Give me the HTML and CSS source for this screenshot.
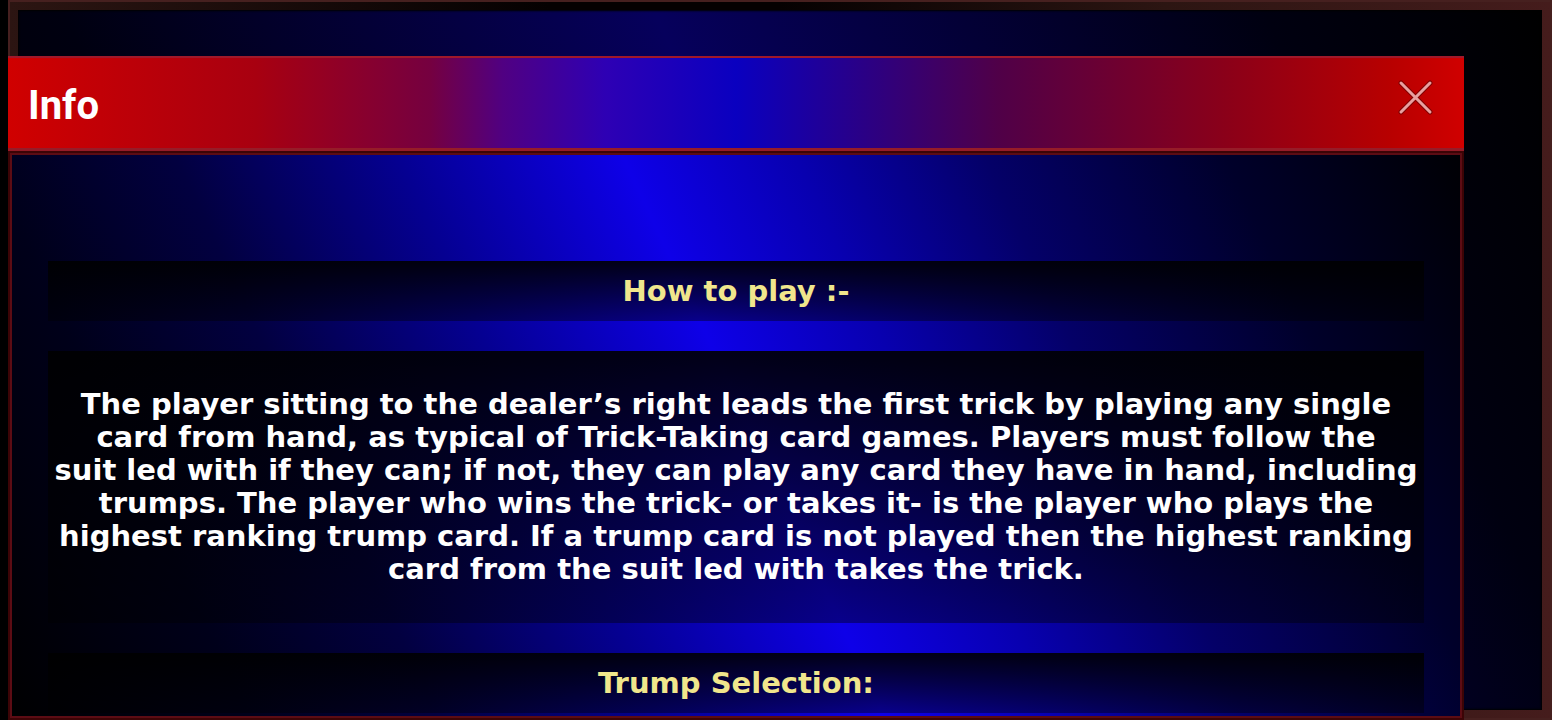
FILE: index.html
```html
<!DOCTYPE html>
<html lang="en">
<head>
  <meta charset="UTF-8" />
  <meta name="viewport" content="width=device-width, initial-scale=1" />
  <title>Info</title>
  <link rel="stylesheet" href="styles.css">
</head>
<body>
  <div class="frame">
    <div class="table"></div>
  </div>

  <div class="popup" role="dialog" aria-labelledby="popupTitle">
    <div class="popup-header">
      <h1 id="popupTitle">Info</h1>
      <button type="button" class="close-btn" aria-label="Close">
        <svg viewBox="0 0 36 36" aria-hidden="true">
          <path class="edge" d="M3 3l29 29M32 3L3 32"/>
          <path class="cross" d="M3 3l29 29M32 3L3 32"/>
        </svg>
      </button>
    </div>

    <div class="popup-content">
      <h2 class="card">How to play :-</h2>
      <p class="card rules">
        The player sitting to the dealer’s right leads the first trick by playing any single<br>
        card from hand, as typical of Trick-Taking card games. Players must follow the<br>
        suit led with if they can; if not, they can play any card they have in hand, including<br>
        trumps. The player who wins the trick- or takes it- is the player who plays the<br>
        highest ranking trump card. If a trump card is not played then the highest ranking<br>
        card from the suit led with takes the trick.
      </p>
      <h2 class="card">Trump Selection:</h2>
    </div>
  </div>
</body>
</html>
```
FILE: styles.css
```css
* {
  box-sizing: border-box;
}
body {
  margin: 0;
  height: 100vh;
  padding-left: 8px;
  background: #000;
  font-family: "DejaVu Sans", sans-serif;
  overflow: hidden;
}
.frame {
  height: 100%;
  display: flex;
  padding: 8px;
  border: 2px solid #46201f;
  background: linear-gradient(90deg, #2c1512, #050101 35%, #050101 50%, #2c1512 75%, #451c1c);
}
.table {
  flex: 1;
  background: linear-gradient(65deg, #000, #000010 20%, #06005c 52%, #000010 85%, #000);
  box-shadow: inset 0 0 2px 1px #000;
}
/* popup sits over the table */
.popup {
  position: fixed;
  top: 56px;
  right: 88px;
  bottom: 0;
  left: 8px;
  display: flex;
  flex-direction: column;
}
.popup-header {
  display: flex;
  justify-content: space-between;
  align-items: flex-start;
  height: 95px;
  flex-shrink: 0;
  padding: 22px 30px 0 20px;
  border-top: 2px solid #a0182a;
  border-bottom: 3px solid #961c28;
  background: linear-gradient(90deg, #d00000, #a80010 17%, #750040 29%, #500082 34%, #2e00b4 41%, #0a00c0 50%, #2b0084 59%, #500048 68%, #8c0018 84%, #b80000 95%, #d00000);
}
.popup-header h1 {
  margin: 0;
  font-family: Roboto, sans-serif;
  font-size: 40px;
  line-height: 52px;
  color: #fff;
}
.close-btn {
  width: 36px;
  height: 36px;
  padding: 0;
  border: none;
  background: none;
  cursor: pointer;
}
.close-btn svg {
  display: block;
  fill: none;
  stroke-linecap: round;
}
.close-btn .edge {
  stroke: #800000;
  stroke-width: 5;
}
.close-btn .cross {
  stroke: #e8a0a0;
  stroke-width: 3;
}
.popup-content {
  flex: 1;
  display: flex;
  flex-direction: column;
  gap: 30px;
  min-height: 0;
  padding: 108px 38px 8px;
  border: 2px solid #3c0406;
  box-shadow: inset 0 0 0 2px #5c0c14;
  background: linear-gradient(65deg, #000 0%, #00001a 14%, #020040 25%, #050092 38%, #0e00e8 51%, #0800b0 61%, #040068 72%, #00002a 86%, #000003 100%) border-box;
}
.card {
  margin: 0;
  padding: 12px 8px;
  text-align: center;
  font-size: 29px;
  font-weight: bold;
  line-height: 36px;
  color: #f0e68c;
  background: linear-gradient(rgba(0, 0, 0, 0.9), rgba(0, 0, 0, 0.4));
}
.rules {
  padding: 37px 0;
  line-height: 33px;
  color: #fff;
  white-space: nowrap;
}
```
